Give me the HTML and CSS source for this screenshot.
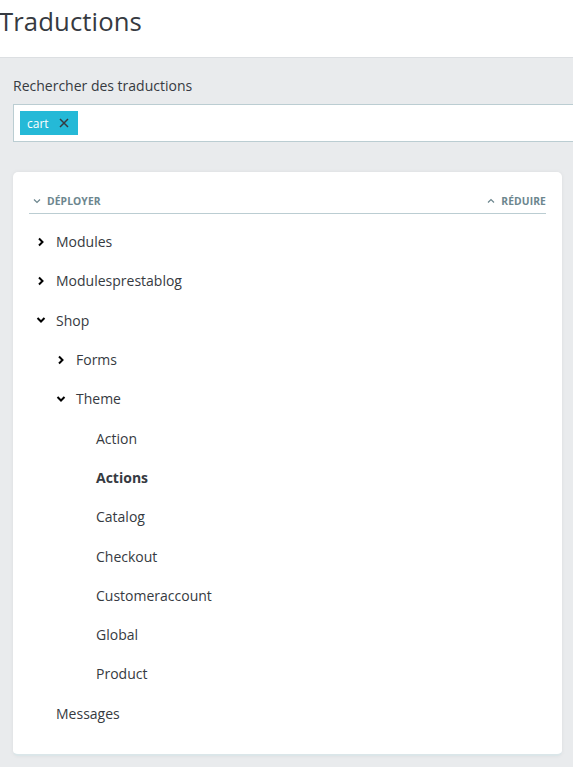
FILE: index.html
```html
<!DOCTYPE html>
<html lang="fr">
<head>
<meta charset="utf-8">
<title>Traductions</title>
<link rel="stylesheet" href="styles.css">
</head>
<body>
<header class="page-head">
  <h1 class="title">Traductions</h1>
</header>
<main class="content">
  <div class="search">
    <label class="search-label">Rechercher des traductions</label>
    <div class="search-input">
      <span class="tag">cart
        <svg class="tag-x" width="10" height="10" viewBox="0 0 10 10"><path d="M1 1L9 9M9 1L1 9" stroke="#363a41" stroke-width="1.5" fill="none"/></svg>
      </span>
    </div>
  </div>
  <section class="card">
    <div class="card-tools">
      <span class="tool"><svg width="8" height="6" viewBox="0 0 8 6"><path d="M1 1.5L4 4.5L7 1.5" stroke="#6c868e" stroke-width="1.2" fill="none"/></svg>DÉPLOYER</span>
      <span class="tool"><svg width="8" height="6" viewBox="0 0 8 6"><path d="M1 4.5L4 1.5L7 4.5" stroke="#6c868e" stroke-width="1.2" fill="none"/></svg>RÉDUIRE</span>
    </div>
    <ul class="tree">
      <li class="node l1"><svg class="chev" width="10" height="10" viewBox="0 0 10 10"><path d="M3 1.5L6.5 5L3 8.5" stroke="#000" stroke-width="2" fill="none"/></svg>Modules</li>
      <li class="node l1"><svg class="chev" width="10" height="10" viewBox="0 0 10 10"><path d="M3 1.5L6.5 5L3 8.5" stroke="#000" stroke-width="2" fill="none"/></svg>Modulesprestablog</li>
      <li class="node l1"><svg class="chev" width="10" height="10" viewBox="0 0 10 10"><path d="M1.5 3L5 6.5L8.5 3" stroke="#000" stroke-width="2" fill="none"/></svg>Shop</li>
      <li class="node l2"><svg class="chev" width="10" height="10" viewBox="0 0 10 10"><path d="M3 1.5L6.5 5L3 8.5" stroke="#000" stroke-width="2" fill="none"/></svg>Forms</li>
      <li class="node l2"><svg class="chev" width="10" height="10" viewBox="0 0 10 10"><path d="M1.5 3L5 6.5L8.5 3" stroke="#000" stroke-width="2" fill="none"/></svg>Theme</li>
      <li class="node l3">Action</li>
      <li class="node l3 active">Actions</li>
      <li class="node l3">Catalog</li>
      <li class="node l3">Checkout</li>
      <li class="node l3">Customeraccount</li>
      <li class="node l3">Global</li>
      <li class="node l3">Product</li>
      <li class="node l1 leaf">Messages</li>
    </ul>
  </section>
</main>
</body>
</html>
```
FILE: styles.css
```css
html, body {
  margin: 0;
  padding: 0;
}
body {
  font-family: "Open Sans", "Noto Sans", sans-serif;
  color: #363a41;
  background: #e9ebed;
  overflow: hidden;
  width: 573px;
  height: 767px;
}
.page-head {
  background: #fff;
  height: 57px;
  border-bottom: 1px solid #dcdfe2;
}
.title {
  margin: 0;
  padding-top: 4px;
  font-size: 25.7px;
  font-weight: 400;
  line-height: 36px;
  letter-spacing: 0.1px;
  margin-left: -1px;
}
.content {
  padding: 18px 0 0 13px;
  overflow: hidden;
}
.search-label {
  display: block;
  font-size: 14px;
  line-height: 20px;
  margin-bottom: 8px;
}
.search-input {
  margin-right: -40px;
  height: 36px;
  background: #fff;
  border: 1px solid #bbcdd2;
  display: flex;
  align-items: center;
  padding-left: 6px;
  box-sizing: content-box;
}
.tag {
  display: inline-flex;
  align-items: center;
  background: #25b9d7;
  color: #fff;
  font-size: 12px;
  height: 24px;
  padding: 0 9px 0 7px;
  width: 42px;
}
.tag-x {
  margin-left: auto;
}
.card {
  margin-top: 30px;
  margin-bottom: 10px;
  width: 549px;
  background: #fff;
  border-radius: 5px;
  box-shadow: 0 0 4px 0 rgba(0, 0, 0, 0.06);
  box-sizing: border-box;
  padding: 16px 16px 21px;
  border-bottom: 2px solid #dbe6e9;
}
.card-tools {
  display: flex;
  justify-content: space-between;
  height: 25px;
  align-items: center;
  border-bottom: 1px solid #bbcdd2;
}
.tool {
  display: inline-flex;
  align-items: center;
  gap: 6px;
  font-size: 10.3px;
  font-weight: 700;
  color: #6c868e;
  letter-spacing: 0.1px;
}
.tool svg {
  margin-left: 4px;
}
.tree {
  list-style: none;
  margin: 8px 0 0;
  padding: 0;
}
.node {
  display: flex;
  align-items: center;
  height: 39.3px;
  font-size: 14px;
}
.chev {
  margin-right: 10px;
  flex: none;
}
.l1 { padding-left: 7px; }
.l2 { padding-left: 27px; }
.l3 { padding-left: 67px; }
.l1.leaf { padding-left: 27px; }
.active { font-weight: 700; }
```
